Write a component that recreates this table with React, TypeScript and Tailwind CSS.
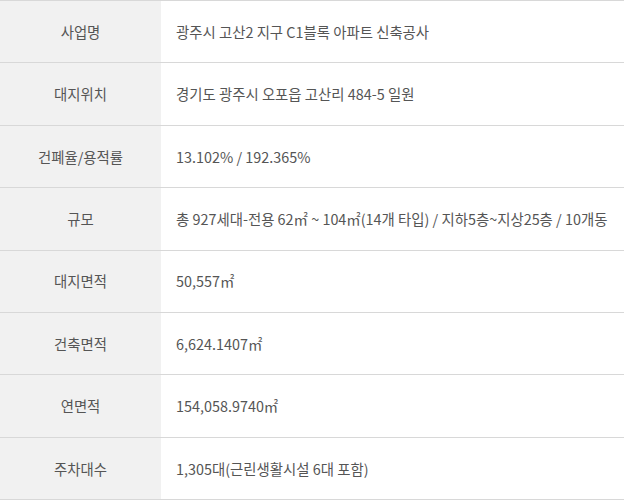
const rows: [string, string][] = [
  ['사업명', '광주시 고산2 지구 C1블록 아파트 신축공사'],
  ['대지위치', '경기도 광주시 오포읍 고산리 484-5 일원'],
  ['건폐율/용적률', '13.102% / 192.365%'],
  ['규모', '총 927세대-전용 62㎡ ~ 104㎡(14개 타입) / 지하5층~지상25층 / 10개동'],
  ['대지면적', '50,557㎡'],
  ['건축면적', '6,624.1407㎡'],
  ['연면적', '154,058.9740㎡'],
  ['주차대수', '1,305대(근린생활시설 6대 포함)'],
];

export default function App() {
  return (
    <div className="w-[624px] h-[502px] bg-white font-['Noto_Sans_CJK_KR',sans-serif] text-[14.4px] text-[#555]">
      <div className="border-t border-[#d8d8d8]">
        {rows.map(([label, value]) => (
          <div key={label} className="flex h-[62.375px] border-b border-[#d8d8d8]">
            <div className="w-[161px] shrink-0 bg-[#f1f1f1] flex items-center justify-center">
              {label}
            </div>
            <div className="flex-1 flex items-center pl-[15px] whitespace-nowrap">{value}</div>
          </div>
        ))}
      </div>
    </div>
  );
}
